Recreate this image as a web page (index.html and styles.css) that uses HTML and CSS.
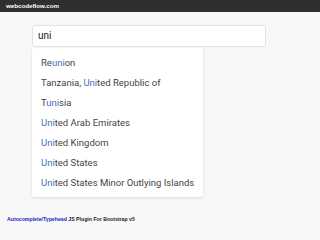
FILE: index.html
```html
<!DOCTYPE html>
<html>
<head>
<meta charset="utf-8">
<link rel="stylesheet" href="styles.css">
</head>
<body>
<div class="topbar">webcodeflow.com</div>
<div class="main">
  <div class="search">uni</div>
  <ul class="menu">
    <li>Re<b>uni</b>on</li>
    <li>Tanzania, <b>Uni</b>ted Republic of</li>
    <li>T<b>uni</b>sia</li>
    <li><b>Uni</b>ted Arab Emirates</li>
    <li><b>Uni</b>ted Kingdom</li>
    <li><b>Uni</b>ted States</li>
    <li><b>Uni</b>ted States Minor Outlying Islands</li>
  </ul>
</div>
<div class="footer"><a class="link">Autocomplete/Typehead</a> JS Plugin For Bootstrap v5</div>
</body>
</html>
```
FILE: styles.css
```css
html, body {
  margin: 0;
  padding: 0;
  background: #f8f8f8;
  height: 100%;
}
.topbar {
  height: 12px;
  line-height: 12px;
  background: #2f2f2f;
  color: #fff;
  font-family: "Liberation Sans", Arial, sans-serif;
  font-weight: bold;
  font-size: 6.2px;
  padding-left: 6px;
}
.main {
  padding: 13px 0 0 32px;
}
.search {
  box-sizing: border-box;
  width: 234px;
  height: 22px;
  line-height: 20px;
  border: 1px solid #e2e2e2;
  border-radius: 3px;
  background: #fff;
  padding: 0 5px;
  font-family: Roboto, sans-serif;
  font-size: 10px;
  color: #222;
}
.menu {
  list-style: none;
  margin: 1px 0 0 0;
  padding: 5px 0 4px 0;
  width: 171px;
  background: #fff;
  box-shadow: 0 1px 3px rgba(0,0,0,0.12);
  border-radius: 2px;
}
.menu li {
  height: 20px;
  line-height: 20px;
  padding-left: 9px;
  font-family: Roboto, sans-serif;
  font-size: 9.5px;
  color: #444;
  white-space: nowrap;
}
.menu li b {
  font-weight: normal;
  color: #3f6fc4;
}
.footer {
  margin: 18px 0 0 7px;
  font-family: "Liberation Sans", Arial, sans-serif;
  font-weight: bold;
  font-size: 5.2px;
  line-height: 8px;
  color: #222;
}
.link {
  color: #2323c8;
}
```
